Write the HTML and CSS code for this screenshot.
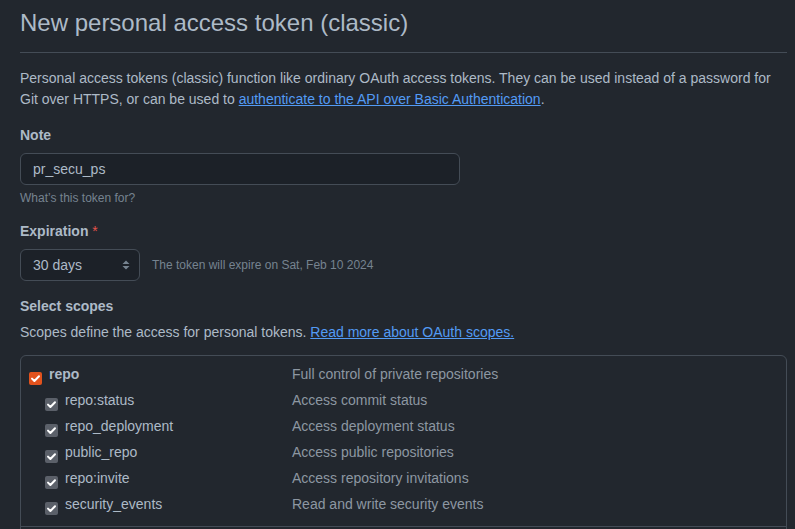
FILE: index.html
```html
<!DOCTYPE html>
<html lang="en">
<head>
<meta charset="utf-8">
<title>New personal access token (classic)</title>
<link rel="stylesheet" href="styles.css">
</head>
<body>
<div class="page">
  <div class="subhead">
    <h2 class="subhead-title">New personal access token (classic)</h2>
  </div>
  <p class="intro">Personal access tokens (classic) function like ordinary OAuth access tokens. They can be used instead of a password for Git over HTTPS, or can be used to <a class="link" href="#">authenticate to the API over Basic Authentication</a>.</p>

  <div class="form-group note-group">
    <label class="label" for="note">Note</label>
    <input class="input" id="note" type="text" value="pr_secu_ps">
    <p class="hint">What’s this token for?</p>
  </div>

  <div class="form-group exp-group">
    <label class="label">Expiration <span class="req">*</span></label>
    <div class="exp-row">
      <div class="select">
        <span>30 days</span>
        <svg class="select-arrows" width="8" height="10" viewBox="0 0 8 10"><path d="M4 0.5 L7.5 4 H0.5 Z M4 9.5 L7.5 6 H0.5 Z" fill="#768390"/></svg>
      </div>
      <span class="exp-note">The token will expire on Sat, Feb 10 2024</span>
    </div>
  </div>

  <div class="scopes">
    <h3 class="label scopes-title">Select scopes</h3>
    <p class="scopes-desc">Scopes define the access for personal tokens. <a class="link" href="#">Read more about OAuth scopes.</a></p>
    <div class="scope-box">
      <div class="scope-group">
        <div class="scope-row">
          <div class="scope-name parent"><span class="cb cb-main"><svg width="13" height="13" viewBox="0 0 13 13"><path d="M3 6.6 L5.4 9 L10 4.2" stroke="#fff" stroke-width="2" fill="none" stroke-linecap="round" stroke-linejoin="round"/></svg></span><b>repo</b></div>
          <div class="scope-desc">Full control of private repositories</div>
        </div>
        <div class="scope-row">
          <div class="scope-name child"><span class="cb cb-sub"><svg width="13" height="13" viewBox="0 0 13 13"><path d="M3 6.6 L5.4 9 L10 4.2" stroke="#fff" stroke-width="2" fill="none" stroke-linecap="round" stroke-linejoin="round"/></svg></span>repo:status</div>
          <div class="scope-desc">Access commit status</div>
        </div>
        <div class="scope-row">
          <div class="scope-name child"><span class="cb cb-sub"><svg width="13" height="13" viewBox="0 0 13 13"><path d="M3 6.6 L5.4 9 L10 4.2" stroke="#fff" stroke-width="2" fill="none" stroke-linecap="round" stroke-linejoin="round"/></svg></span>repo_deployment</div>
          <div class="scope-desc">Access deployment status</div>
        </div>
        <div class="scope-row">
          <div class="scope-name child"><span class="cb cb-sub"><svg width="13" height="13" viewBox="0 0 13 13"><path d="M3 6.6 L5.4 9 L10 4.2" stroke="#fff" stroke-width="2" fill="none" stroke-linecap="round" stroke-linejoin="round"/></svg></span>public_repo</div>
          <div class="scope-desc">Access public repositories</div>
        </div>
        <div class="scope-row">
          <div class="scope-name child"><span class="cb cb-sub"><svg width="13" height="13" viewBox="0 0 13 13"><path d="M3 6.6 L5.4 9 L10 4.2" stroke="#fff" stroke-width="2" fill="none" stroke-linecap="round" stroke-linejoin="round"/></svg></span>repo:invite</div>
          <div class="scope-desc">Access repository invitations</div>
        </div>
        <div class="scope-row">
          <div class="scope-name child"><span class="cb cb-sub"><svg width="13" height="13" viewBox="0 0 13 13"><path d="M3 6.6 L5.4 9 L10 4.2" stroke="#fff" stroke-width="2" fill="none" stroke-linecap="round" stroke-linejoin="round"/></svg></span>security_events</div>
          <div class="scope-desc">Read and write security events</div>
        </div>
      </div>
      <div class="scope-group">
        <div class="scope-row">
          <div class="scope-name parent"><span class="cb cb-empty"></span><b>workflow</b></div>
          <div class="scope-desc">Update GitHub Action workflows</div>
        </div>
      </div>
    </div>
  </div>
</div>
</body>
</html>
```

FILE: styles.css
```css
html, body {
  margin: 0;
  padding: 0;
  background: #22272e;
}

body {
  font-family: "Liberation Sans", Arial, Helvetica, sans-serif;
  font-size: 14px;
  line-height: 21px;
  color: #adbac7;
}

.page {
  width: 767px;
  padding-left: 20px;
}

.subhead {
  padding-top: 4px;
  padding-bottom: 10px;
  border-bottom: 1px solid #444c56;
}

.subhead-title {
  margin: 0;
  font-size: 24px;
  line-height: 38px;
  font-weight: 400;
  color: #adbac7;
}

.intro {
  margin: 15px 0 0;
}

.link {
  color: #539bf5;
  text-decoration: underline;
}

.form-group {
  margin-top: 15px;
}

.exp-group {
  margin-top: 14px;
}

.label {
  display: block;
  margin: 0;
  font-size: 14px;
  line-height: 21px;
  font-weight: 700;
  color: #adbac7;
}

.req {
  color: #e5534b;
  font-weight: 400;
}

.input {
  display: block;
  box-sizing: border-box;
  width: 440px;
  height: 32px;
  margin-top: 7px;
  padding: 0 12px;
  border: 1px solid #444c56;
  border-radius: 6px;
  background: #1c2128;
  color: #adbac7;
  font-family: inherit;
  font-size: 14px;
  outline: none;
}

.hint {
  margin: 4px 0 0;
  font-size: 12px;
  line-height: 18px;
  color: #768390;
}

.exp-row {
  display: flex;
  align-items: center;
  margin-top: 7px;
}

.select {
  box-sizing: border-box;
  width: 120px;
  height: 32px;
  padding: 0 9px 0 12px;
  display: flex;
  align-items: center;
  justify-content: space-between;
  border: 1px solid #444c56;
  border-radius: 6px;
  background: #1c2128;
  color: #adbac7;
}

.select-arrows {
  display: block;
}

.exp-note {
  margin-left: 12px;
  font-size: 12px;
  line-height: 18px;
  color: #768390;
}

.scopes-title {
  margin-top: 15px;
}

.scopes-desc {
  margin: 5px 0 0;
}

.scope-box {
  margin-top: 12px;
  border: 1px solid #444c56;
  border-radius: 6px;
}

.scope-group {
  padding: 5px 0 9px;
  border-bottom: 1px solid #444c56;
}

.scope-row {
  display: grid;
  grid-template-columns: 271px 1fr;
  height: 26px;
  line-height: 26px;
}

.scope-name {
  display: flex;
  align-items: flex-start;
  white-space: nowrap;
  color: #adbac7;
}

.scope-name.parent {
  padding-left: 8px;
}

.scope-name.child {
  padding-left: 24px;
}

.cb {
  flex: none;
  width: 13px;
  height: 13px;
  margin-top: 11px;
  margin-right: 7px;
  border-radius: 2px;
  display: flex;
}

.cb-main {
  background: #e2521d;
}

.cb-sub {
  background: #5b6069;
}

.cb-empty {
  box-sizing: border-box;
  border: 1px solid #768390;
}

.scope-desc {
  color: #8d97a2;
}
```
